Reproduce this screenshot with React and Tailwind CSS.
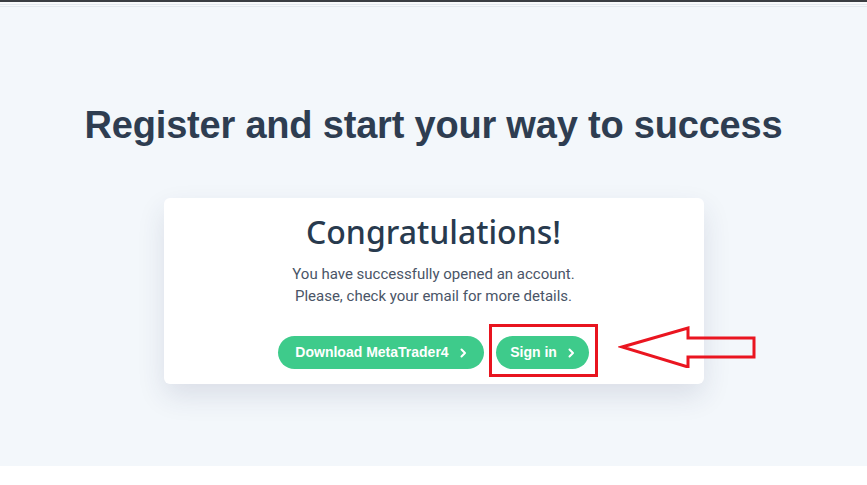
import React from "react";

function Chevron() {
  return (
    <svg width="8" height="10" viewBox="0 0 8 10" fill="none" className="ml-[10px]">
      <path d="M2.5 1.5 L6 5 L2.5 8.5" stroke="white" strokeWidth="2" strokeLinecap="round" strokeLinejoin="round" />
    </svg>
  );
}

export default function App() {
  return (
    <div className="w-[867px] h-[485px] bg-white flex flex-col overflow-hidden">
      <div className="h-[2px] bg-[#3a3d42]" />
      <div className="h-[2px] bg-[#f7f9fb]" />
      <div className="h-[1px] bg-[#e3e9ef]" />
      <div className="h-[1px] bg-[#f7f9fb]" />
      <div className="h-[1px] bg-[#e3e9ef]" />
      <div className="relative flex-1 max-h-[459px] bg-[#f3f7fb] flex flex-col items-center">
        <h1
          className="mt-[94px] text-[38px] leading-[48px] font-bold text-[#2e3d51] tracking-[-0.2px]"
          style={{ fontFamily: '"Liberation Sans", Arial, sans-serif' }}
        >
          Register and start your way to success
        </h1>
        <div className="mt-[49px] w-[540px] h-[186px] bg-white rounded-[6px] shadow-[0_12px_28px_rgba(40,50,90,0.12)] flex flex-col items-center">
          <div
            className="mt-[14px] text-[32px] leading-[40px] font-medium text-[#283a4e]"
            style={{ fontFamily: '"Noto Sans", sans-serif' }}
          >
            Congratulations!
          </div>
          <p
            className="mt-[11px] text-[15px] leading-[22px] text-[#4a5567] text-center"
            style={{ fontFamily: 'Roboto, sans-serif' }}
          >
            You have successfully opened an account.
            <br />
            Please, check your email for more details.
          </p>
          <div
            className="mt-[29px] flex gap-[12px]"
            style={{ fontFamily: '"Liberation Sans", Arial, sans-serif' }}
          >
            <button className="h-[33px] w-[206px] rounded-full bg-[#3ecb8b] text-white text-[14px] font-bold flex items-center justify-center">
              Download MetaTrader4
              <Chevron />
            </button>
            <div className="relative">
              <button className="h-[33px] w-[93px] rounded-full bg-[#3ecb8b] text-white text-[14px] font-bold flex items-center justify-center">
                Sign in
                <Chevron />
              </button>
              <div className="absolute left-[-7px] top-[-12px] w-[109px] h-[53px] border-[3px] border-[#e8141f]" />
            </div>
          </div>
        </div>
        <svg className="absolute left-[618px] top-[313px]" width="142" height="48" viewBox="618 320 142 48" fill="none">
          <polygon
            points="622,347 688,328 688,338 754,338 754,357 688,357 688,367"
            stroke="#ea1520"
            strokeWidth="3"
            strokeLinejoin="miter"
            fill="none"
          />
        </svg>
      </div>
    </div>
  );
}
